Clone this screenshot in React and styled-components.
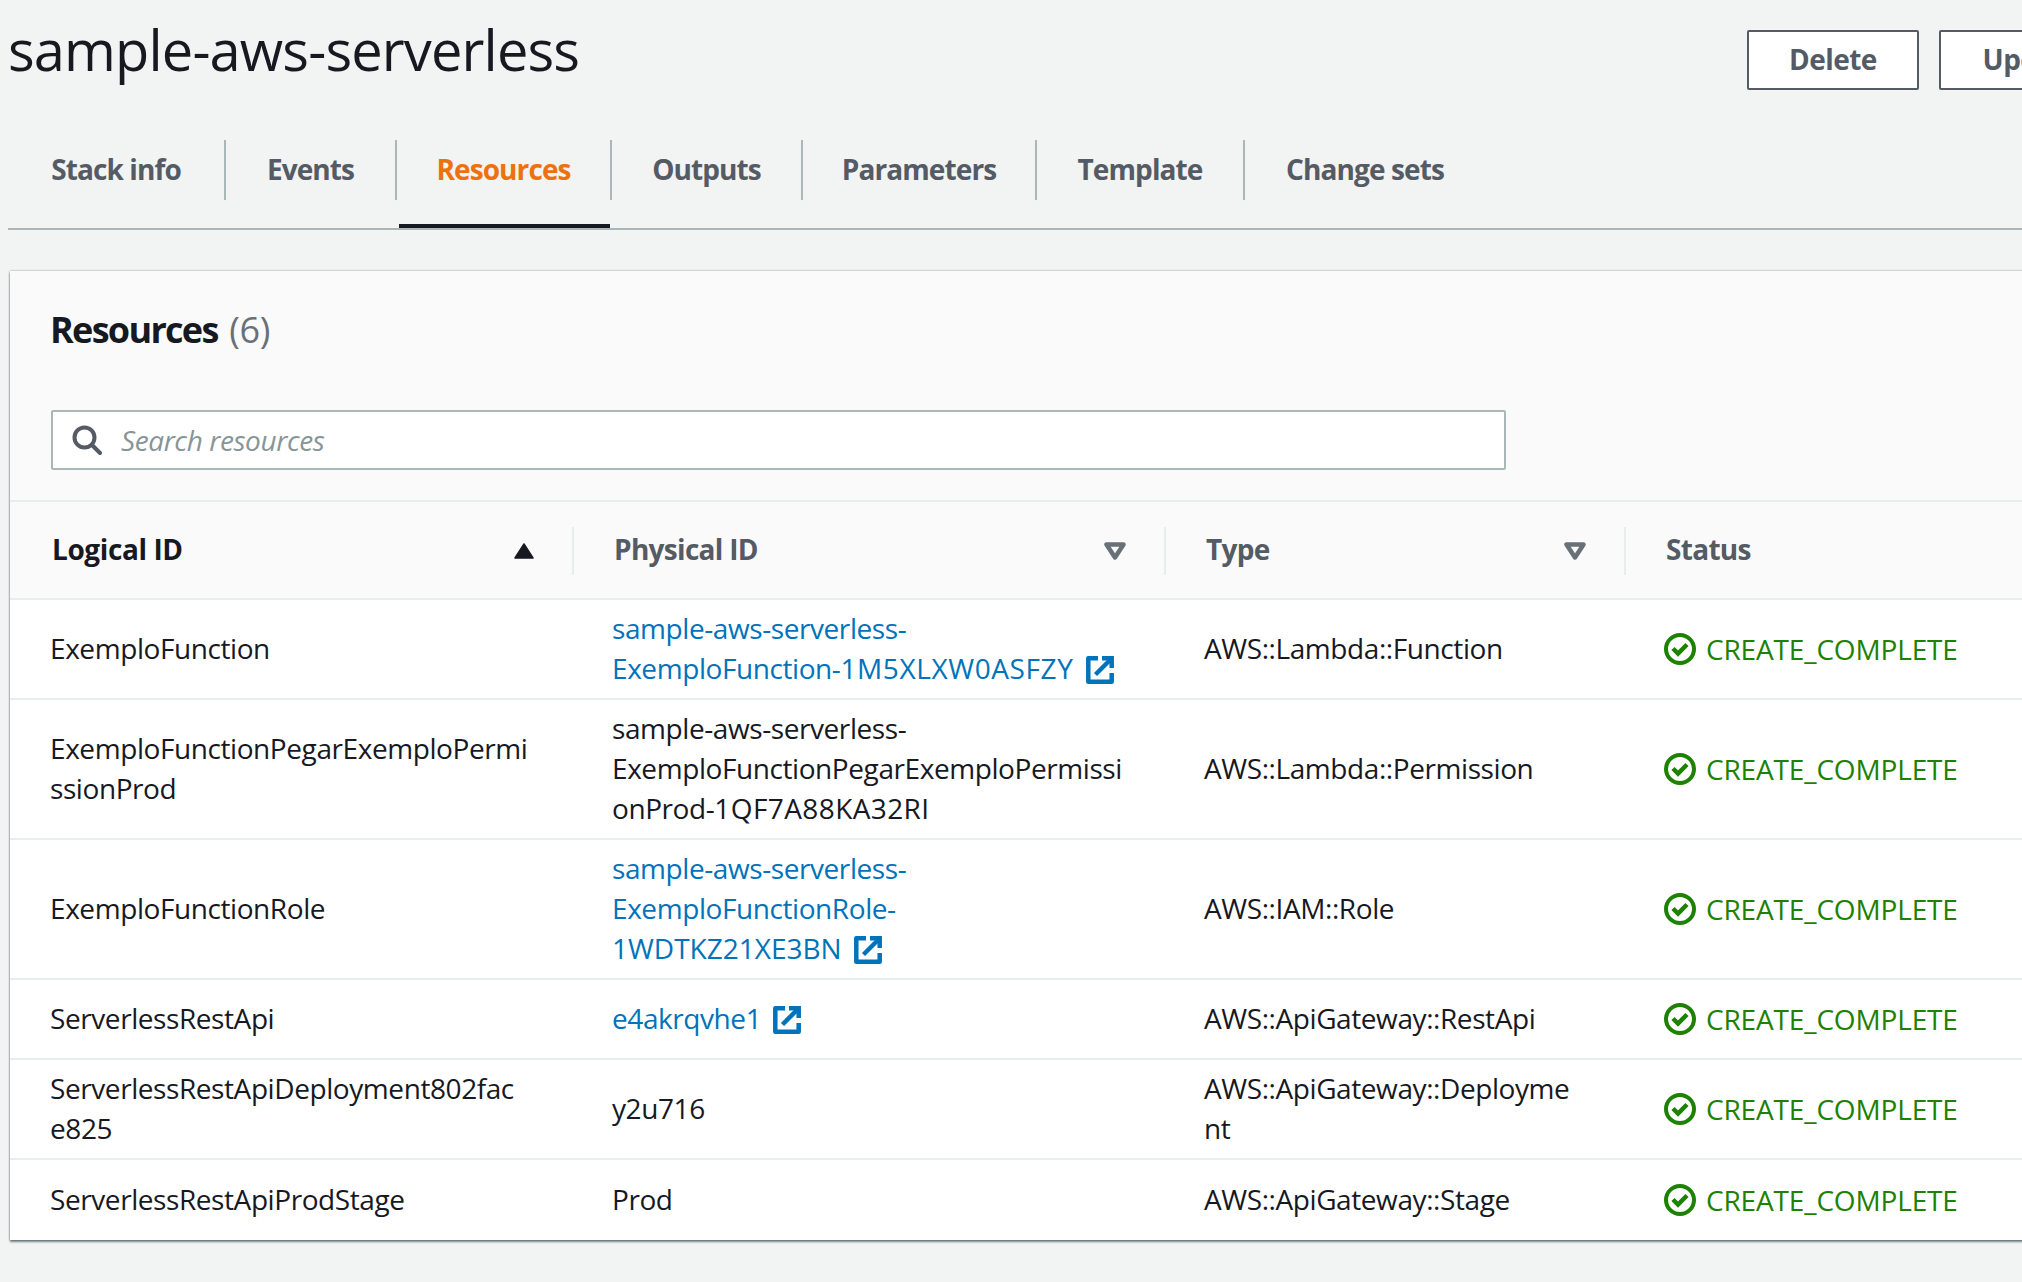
import React from "react";
import styled, { createGlobalStyle } from "styled-components";

const GlobalStyle = createGlobalStyle`
  html, body { margin: 0; padding: 0; background: #f2f3f3; }
  body { font-family: "Open Sans", "Noto Sans", sans-serif; color: #16191f; }
  * { box-sizing: border-box; }
`;

const Caps = styled.span`
  letter-spacing: ${(p) => p.$spacing}px;
`;

const tabs = [
  { label: "Stack info", width: 218 },
  { label: "Events", width: 171 },
  { label: "Resources", width: 215, active: true },
  { label: "Outputs", width: 191 },
  { label: "Parameters", width: 234 },
  { label: "Template", width: 208 },
  { label: "Change sets", width: 240, last: true },
];

const rows = [
  {
    logical: ["ExemploFunction"],
    physical: ["sample-aws-serverless-", <>ExemploFunction-<Caps $spacing={0.6}>1M5XLXW0ASFZY</Caps></>],
    link: true,
    type: ["AWS::Lambda::Function"],
  },
  {
    logical: ["ExemploFunctionPegarExemploPermi", "ssionProd"],
    physical: ["sample-aws-serverless-", "ExemploFunctionPegarExemploPermissi", <>onProd-<Caps $spacing={0.4}>1QF7A88KA32RI</Caps></>],
    type: ["AWS::Lambda::Permission"],
  },
  {
    logical: ["ExemploFunctionRole"],
    physical: ["sample-aws-serverless-", "ExemploFunctionRole-", <Caps $spacing={0}>1WDTKZ21XE3BN</Caps>],
    link: true,
    type: ["AWS::IAM::Role"],
  },
  {
    logical: ["ServerlessRestApi"],
    physical: ["e4akrqvhe1"],
    link: true,
    type: ["AWS::ApiGateway::RestApi"],
  },
  {
    logical: ["ServerlessRestApiDeployment802fac", "e825"],
    physical: ["y2u716"],
    type: ["AWS::ApiGateway::Deployme", "nt"],
  },
  {
    logical: ["ServerlessRestApiProdStage"],
    physical: ["Prod"],
    type: ["AWS::ApiGateway::Stage"],
  },
];

function Lines({ lines }) {
  return lines.map((line, i) => (
    <React.Fragment key={i}>
      {i > 0 && <br />}
      {line}
    </React.Fragment>
  ));
}

function ExternalIcon() {
  return (
    <LinkIcon viewBox="0 0 28 28" fill="none" stroke="#0073bb" strokeWidth="4.5">
      <path d="M12 2.3H2.3v23.4h23.4V17" strokeLinejoin="round" />
      <path d="M9.5 18.5L24.5 3.5" />
      <path d="M16 2.3h9.7V12" />
    </LinkIcon>
  );
}

function StatusIcon() {
  return (
    <svg width="32" height="32" viewBox="0 0 32 32" fill="none" stroke="#1d8102">
      <circle cx="16" cy="16" r="14" strokeWidth="4" />
      <path d="M9 15.5l5 5 9-9" strokeWidth="4.5" />
    </svg>
  );
}

function FilterIcon() {
  return (
    <svg width="22" height="18" viewBox="0 0 22 18" fill="none" stroke="#687078">
      <path d="M2.5 2.5h17L11 15.5z" strokeWidth="4.5" strokeLinejoin="round" />
    </svg>
  );
}

export default function App() {
  return (
    <Page>
      <GlobalStyle />
      <TitleBar>
        <Title>sample-aws-serverless</Title>
        <Actions>
          <Button $width={172}>Delete</Button>
          <Button $width={186}>Update</Button>
        </Actions>
      </TitleBar>

      <TabBar>
        {tabs.map((tab) => (
          <Tab key={tab.label} $width={tab.width} $active={tab.active}>
            <TabLabel $active={tab.active} $last={tab.last}>{tab.label}</TabLabel>
          </Tab>
        ))}
      </TabBar>

      <Card>
        <CardHeader>
          <CardTitle>
            Resources <Count>(6)</Count>
          </CardTitle>
          <SearchBox>
            <svg width="30" height="30" viewBox="0 0 30 30" fill="none" stroke="#545b64" strokeWidth="4">
              <circle cx="12.5" cy="12.5" r="10" />
              <path d="M20 20l8 8" strokeLinecap="round" />
            </svg>
            <SearchText>Search resources</SearchText>
          </SearchBox>
        </CardHeader>

        <HeadRow>
          <HeadCell $sorted>
            Logical ID
            <SortIcon viewBox="0 0 20 16">
              <path d="M10 1L19 15H1z" fill="#16191f" stroke="#16191f" strokeWidth="1.5" strokeLinejoin="round" />
            </SortIcon>
          </HeadCell>
          <HeadCell>
            Physical ID
            <FilterIcon />
          </HeadCell>
          <HeadCell>
            Type
            <FilterIcon />
          </HeadCell>
          <HeadCell $last>Status</HeadCell>
        </HeadRow>

        {rows.map((row) => (
          <Row key={row.logical[0]}>
            <Cell>
              <Lines lines={row.logical} />
            </Cell>
            <Cell $link={row.link}>
              <Lines lines={row.physical} />
              {row.link && <ExternalIcon />}
            </Cell>
            <Cell>
              <Lines lines={row.type} />
            </Cell>
            <StatusCell>
              <StatusIcon />
              CREATE_COMPLETE
            </StatusCell>
          </Row>
        ))}
      </Card>
    </Page>
  );
}

const Page = styled.div`
  width: 2022px;
  height: 1282px;
  overflow: hidden;
  padding-left: 8px;
  background: #f2f3f3;
  font-size: 28px;
  line-height: 40px;
`;

const TitleBar = styled.div`
  display: flex;
  justify-content: space-between;
  height: 140px;
`;

const Title = styled.h1`
  margin: 0;
  padding-top: 14px;
  font-size: 56px;
  line-height: 70px;
  font-weight: 400;
  letter-spacing: -0.85px;
`;

const Actions = styled.div`
  display: flex;
  gap: 20px;
  padding-top: 30px;
  width: 275px;
  flex-shrink: 0;
`;

const Button = styled.button`
  flex-shrink: 0;
  width: ${(p) => p.$width}px;
  height: 60px;
  padding: 0 0 2px;
  border: 2px solid #545b64;
  border-radius: 2px;
  background: #fff;
  color: #545b64;
  font: 700 28px/38px "Open Sans", sans-serif;
  letter-spacing: -0.55px;
  white-space: nowrap;
`;

const TabBar = styled.div`
  display: flex;
  height: 90px;
  border-bottom: 2px solid #aab7b8;
`;

const Tab = styled.div`
  position: relative;
  width: ${(p) => p.$width}px;
  height: 88px;
  flex-shrink: 0;
  &::after {
    content: "";
    display: ${(p) => (p.$active ? "block" : "none")};
    position: absolute;
    left: 2px;
    right: 2px;
    bottom: 0;
    height: 4px;
    background: #16191f;
  }
`;

const TabLabel = styled.div`
  display: flex;
  align-items: center;
  justify-content: center;
  height: 60px;
  padding: 0 42px 2px;
  white-space: nowrap;
  font-weight: 700;
  letter-spacing: -0.9px;
  color: ${(p) => (p.$active ? "#ec7211" : "#545b64")};
  border-right: ${(p) => (p.$last ? "none" : "2px solid #aab7b8")};
`;

const Card = styled.div`
  width: 2100px;
  margin: 41px 0 0 2px;
  background: #fff;
  box-shadow: 0 2px 2px rgba(0, 28, 36, 0.5), 0 0 2px rgba(0, 28, 36, 0.4);
`;

const CardHeader = styled.div`
  height: 229px;
  padding: 39px 40px 0 41px;
  background: #fafafa;
`;

const CardTitle = styled.h2`
  margin: 0 0 60px;
  margin-left: -1px;
  font-size: 36px;
  line-height: 40px;
  font-weight: 700;
  letter-spacing: -1.7px;
  word-spacing: 4px;
`;

const Count = styled.span`
  font-weight: 400;
  color: #687078;
  letter-spacing: -0.4px;
`;

const SearchBox = styled.div`
  display: flex;
  align-items: center;
  gap: 19px;
  width: 1455px;
  height: 60px;
  padding-left: 19px;
  background: #fff;
  border: 2px solid #aab7b8;
  border-radius: 2px;
`;

const SearchText = styled.span`
  font-style: italic;
  color: #879596;
  letter-spacing: -0.4px;
`;

const gridColumns = "564px 592px 460px 1fr";

const HeadRow = styled.div`
  display: grid;
  grid-template-columns: ${gridColumns};
  align-items: center;
  height: 100px;
  padding-top: 2px;
  background: #fafafa;
  border-top: 2px solid #eaeded;
  border-bottom: 2px solid #eaeded;
`;

const HeadCell = styled.div`
  display: flex;
  align-items: center;
  justify-content: space-between;
  height: 48px;
  padding: 0 38px 4px ${(p) => (p.$sorted ? 42 : 40)}px;
  font-weight: 700;
  letter-spacing: ${(p) => (p.$sorted ? -0.4 : -0.7)}px;
  color: ${(p) => (p.$sorted ? "#16191f" : "#545b64")};
  border-right: ${(p) => (p.$last ? "none" : "2px solid #eaeded")};
  svg {
    margin-top: 4px;
  }
`;

const SortIcon = styled.svg`
  width: 20px;
  height: 16px;
`;

const Row = styled.div`
  display: grid;
  grid-template-columns: ${gridColumns};
  align-items: center;
  min-height: 80px;
  padding: 8px 0 10px;
  border-bottom: 2px solid #eaeded;
  &:last-child {
    border-bottom: none;
  }
`;

const Cell = styled.div`
  padding-left: 40px;
  letter-spacing: -0.42px;
  white-space: nowrap;
  color: ${(p) => (p.$link ? "#0073bb" : "#16191f")};
  &:nth-child(2), &:nth-child(3) {
    padding-left: 38px;
  }
`;

const StatusCell = styled.div`
  display: flex;
  align-items: center;
  gap: 10px;
  padding: 2px 0 0 38px;
  color: #1d8102;
  letter-spacing: -0.15px;
`;

const LinkIcon = styled.svg`
  display: inline-block;
  width: 28px;
  height: 28px;
  margin-left: 12px;
  vertical-align: -5px;
`;
